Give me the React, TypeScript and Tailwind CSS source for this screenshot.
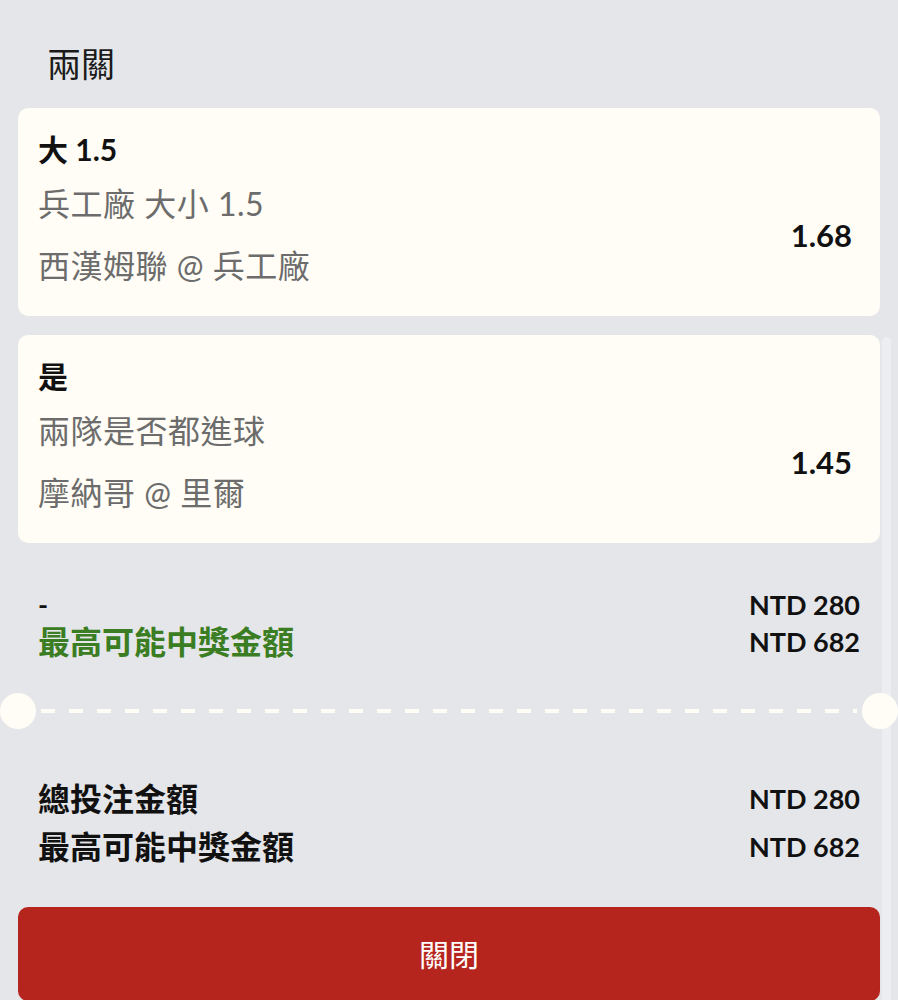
import React from 'react';

const font = "font-['Lato','Noto_Sans_CJK_TC',sans-serif]";

type Leg = { pick: string; market: string; match: string; odds: string };

const legs: Leg[] = [
  { pick: '大 1.5', market: '兵工廠 大小 1.5', match: '西漢姆聯 @ 兵工廠', odds: '1.68' },
  { pick: '是', market: '兩隊是否都進球', match: '摩納哥 @ 里爾', odds: '1.45' },
];

function LegCard({ leg }: { leg: Leg }) {
  return (
    <div className="h-[208px] rounded-[10px] bg-[#fffdf5] pl-[20px] pr-[28px] pt-[22px]">
      <div className="text-[30px] font-bold leading-[38px] text-[#111]">{leg.pick}</div>
      <div className="mt-[16px] flex items-center justify-between">
        <div className="text-[32px] leading-[40px] tracking-[0.5px] text-[#6c6c6c]">
          <div>{leg.market}</div>
          <div className="mt-[22px]">{leg.match}</div>
        </div>
        <div className="text-[31px] font-bold text-[#111]">{leg.odds}</div>
      </div>
    </div>
  );
}

export default function App() {
  return (
    <div className={`relative h-screen overflow-hidden bg-[#e5e6e9] ${font}`}>
      {/* scroll track */}
      <div className="absolute right-[7px] top-[337px] bottom-0 w-[9px] rounded-t-[5px] bg-[#eceef1]" />

      <div className="relative">
        <div className="pl-[47px] pt-[40px] text-[34px] leading-[48px] text-[#1a1a1a]">兩關</div>

        <div className="mt-[20px] flex flex-col gap-[19px] pl-[18px] pr-[18px]">
          {legs.map((leg) => (
            <LegCard key={leg.odds} leg={leg} />
          ))}
        </div>

        <div className="mt-[43px] px-[38px] font-bold leading-[37px]">
          <div className="flex items-center justify-between">
            <span className="text-[27px] text-[#111]">-</span>
            <span className="text-[27px] text-[#111]">NTD 280</span>
          </div>
          <div className="flex items-center justify-between">
            <span className="text-[32px] text-[#3a7d22]">最高可能中獎金額</span>
            <span className="text-[27px] text-[#111]">NTD 682</span>
          </div>
        </div>

        <div className="mt-[33px] flex items-center">
          <div className="h-[36px] w-[36px] shrink-0 rounded-full bg-[#fffdf5]" />
          <div className="mx-[5px] h-[4px] flex-1 bg-[repeating-linear-gradient(90deg,#fffdf5_0_14px,transparent_14px_28px)]" />
          <div className="h-[36px] w-[36px] shrink-0 rounded-full bg-[#fffdf5]" />
        </div>

        <div className="mt-[46px] px-[38px] font-bold leading-[48px] text-[#111]">
          <div className="flex items-center justify-between">
            <span className="text-[32px]">總投注金額</span>
            <span className="text-[27px]">NTD 280</span>
          </div>
          <div className="flex items-center justify-between">
            <span className="text-[32px]">最高可能中獎金額</span>
            <span className="text-[27px]">NTD 682</span>
          </div>
        </div>

        <div className="mx-[18px] mt-[36px]">
          <button className="flex h-[94px] w-full items-center justify-center rounded-[10px] bg-[#b5251d] text-[30px] text-white">
            關閉
          </button>
        </div>
      </div>
    </div>
  );
}
